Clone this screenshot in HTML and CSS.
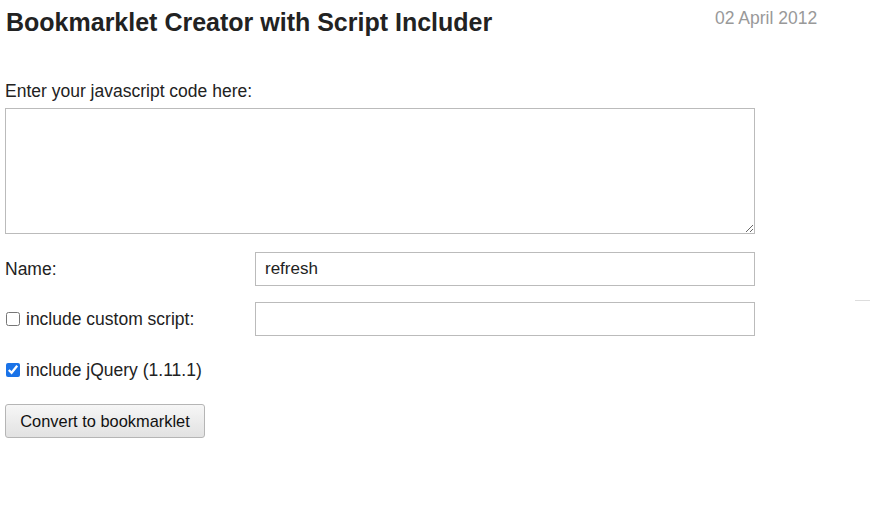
FILE: index.html
```html
<!DOCTYPE html>
<html>
<head>
<meta charset="utf-8">
<link rel="stylesheet" href="styles.css">
</head>
<body>
<div class="page">
  <header class="head">
    <h1 class="title">Bookmarklet Creator with Script Includer</h1>
    <span class="date">02 April 2012</span>
  </header>
  <div class="form">
    <label class="code-label">Enter your javascript code here:</label>
    <textarea class="code"></textarea>
    <div class="row row-name">
      <label class="lbl">Name:</label>
      <input class="field" type="text" value="refresh">
    </div>
    <div class="row row-custom">
      <label class="lbl"><input type="checkbox" class="cb"> include custom script:</label>
      <input class="field" type="text" value="">
    </div>
    <div class="row row-jq">
      <label class="lbl"><input type="checkbox" class="cb" checked> include jQuery (1.11.1)</label>
    </div>
    <div class="row row-btn">
      <button class="btn">Convert to bookmarklet</button>
    </div>
  </div>
  <div class="stub"></div>
</div>
</body>
</html>
```
FILE: styles.css
```css
html, body { margin: 0; padding: 0; background: #fff; }
body { font-family: "Liberation Sans", Arial, sans-serif; color: #222; font-size: 17.5px; }
.page { position: relative; width: 870px; height: 515px; }
.head { display: flex; align-items: flex-start; padding: 7px 0 0 6px; height: 41px; }
.title { margin: 0; font-size: 25px; font-weight: bold; line-height: 30px; color: #222; width: 709px; }
.date { color: #999; font-size: 17.5px; line-height: 20px; margin-top: 1px; }
.form { display: flex; flex-direction: column; padding: 33px 0 0 5px; }
.code-label { line-height: 20px; }
.code { width: 750px; height: 126px; box-sizing: border-box; border: 1px solid #bbb; margin: 7px 0 0 0; padding: 4px; resize: both; font-family: inherit; font-size: 16px; }
.row { display: flex; align-items: center; }
.lbl { width: 250px; display: flex; align-items: center; line-height: 20px; color: #222; }
.field { width: 500px; height: 34px; box-sizing: border-box; border: 1px solid #bbb; padding: 0 9px; font-family: inherit; font-size: 17px; color: #222; margin: 0; }
.row-name { margin-top: 18px; }
.row-custom { margin-top: 16px; }
.row-jq { margin-top: 24px; height: 20px; }
.row-btn { margin-top: 24px; }
.cb { margin: 0 6px 0 1px; width: 14px; height: 14px; accent-color: #1a73e8; }
.btn { width: 200px; height: 34px; box-sizing: border-box; border: 1px solid #b5b5b5; border-radius: 3px; background: linear-gradient(#f6f6f6, #e2e2e2); font-family: inherit; font-size: 16.4px; color: #111; padding: 0; }
.stub { position: absolute; left: 855px; top: 300px; width: 15px; height: 1px; background: #ddd; }
```
